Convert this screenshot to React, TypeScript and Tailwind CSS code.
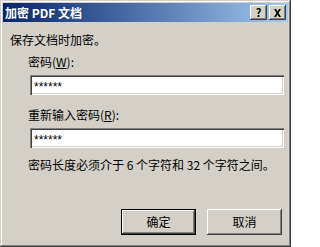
import React from "react";

const cjk = "font-['SimSun','Noto_Sans_CJK_SC','Liberation_Sans',sans-serif]";

function TitleButton({ children }: { children: React.ReactNode }) {
  return (
    <div className="flex h-[15px] w-[17px] items-center justify-center bg-[#d4d0c8] text-[11px] font-bold leading-none text-black shadow-[inset_-1px_-1px_#404040,inset_1px_1px_#fff,inset_-2px_-2px_#808080]">
      {children}
    </div>
  );
}

function PasswordField() {
  return (
    <div className="ml-[27px] flex h-[20px] w-[254px] items-center bg-white pl-[4px] shadow-[inset_1px_1px_#808080,inset_2px_2px_#404040,inset_-1px_-1px_#fff,inset_-2px_-2px_#d4d0c8]">
      <span className="font-['Liberation_Sans',sans-serif] text-[12px] leading-none text-black pt-[3px]">******</span>
    </div>
  );
}

function DialogButton({ label, primary }: { label: string; primary?: boolean }) {
  return (
    <div
      className={`flex h-[26px] w-[75px] items-center justify-center bg-[#d4d0c8] text-[12px] text-black ${
        primary
          ? "border border-black shadow-[inset_-1px_-1px_#404040,inset_1px_1px_#fff,inset_-2px_-2px_#808080]"
          : "shadow-[inset_-1px_-1px_#404040,inset_1px_1px_#fff,inset_-2px_-2px_#808080]"
      }`}
    >
      {label}
    </div>
  );
}

export default function App() {
  return (
    <div
      className={`flex h-[247px] w-[291px] flex-col bg-[#d4d0c8] p-[3px] ${cjk} shadow-[inset_-1px_-1px_#404040,inset_1px_1px_#d4d0c8,inset_-2px_-2px_#808080,inset_2px_2px_#fff]`}
    >
      {/* title bar */}
      <div className="flex h-[19px] items-center justify-between bg-gradient-to-r from-[#0a246a] to-[#a6caf0] pl-[2px] pr-[2px]">
        <span className="text-[12px] font-bold leading-none text-white">加密 PDF 文档</span>
        <div className="flex gap-[2px]">
          <TitleButton>?</TitleButton>
          <TitleButton>
            <svg width="9" height="8" viewBox="0 0 9 8">
              <path d="M1 0h2l1.5 2.5L6 0h2L5.5 4 8 8H6L4.5 5.5 3 8H1l2.5-4z" fill="#000" />
            </svg>
          </TitleButton>
        </div>
      </div>

      {/* body */}
      <div className="flex flex-1 flex-col text-[12px] leading-[14px] text-black">
        <div className="ml-[7px] mt-[11px]">保存文档时加密。</div>
        <div className="ml-[25px] mt-[8px]">
          密码(<span className="underline">W</span>):
        </div>
        <div className="mt-[6px]">
          <PasswordField />
        </div>
        <div className="ml-[25px] mt-[13px]">
          重新输入密码(<span className="underline">R</span>):
        </div>
        <div className="mt-[6px]">
          <PasswordField />
        </div>
        <div className="ml-[25px] mt-[10px]">密码长度必须介于 6 个字符和 32 个字符之间。</div>
        <div className="mt-[37px] flex justify-end gap-[11px] pr-[6px]">
          <DialogButton label="确定" primary />
          <DialogButton label="取消" />
        </div>
      </div>
    </div>
  );
}
